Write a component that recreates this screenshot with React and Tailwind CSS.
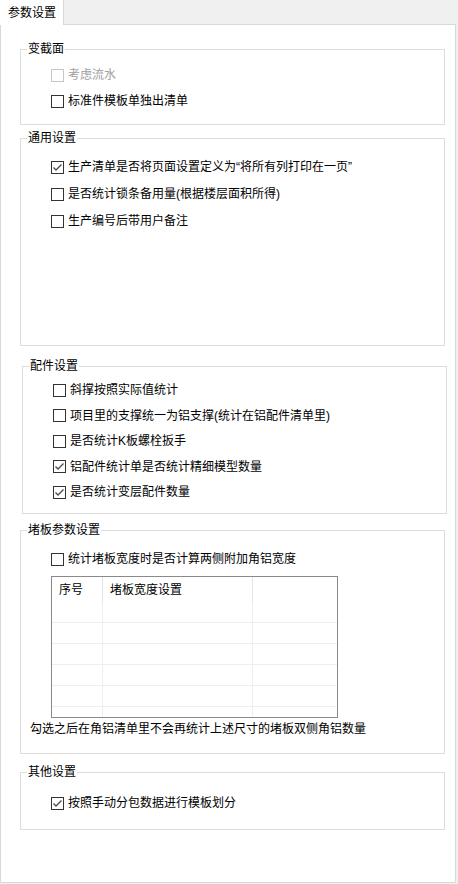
import React from 'react';

const font = { fontFamily: '"Liberation Sans", "Noto Sans CJK SC", sans-serif' };

function CheckBox({ checked, disabled }) {
  return (
    <span
      className={`flex h-[13px] w-[13px] shrink-0 items-center justify-center border bg-white ${
        disabled ? 'border-[#c6c6c6]' : 'border-[#333333]'
      }`}
    >
      {checked && (
        <svg width="11" height="11" viewBox="0 0 11 11" fill="none">
          <polyline points="1.5,5.5 4,8 9.5,2.5" stroke="#4a4a4a" strokeWidth="1.3" />
        </svg>
      )}
    </span>
  );
}

function Row({ label, checked, disabled, className = '' }) {
  return (
    <div className={`flex h-[20px] items-center gap-[4px] pl-[30px] ${className}`}>
      <CheckBox checked={checked} disabled={disabled} />
      <span className={disabled ? 'text-[#a0a0a0]' : 'text-black'}>{label}</span>
    </div>
  );
}

function Group({ title, className = '', children }) {
  return (
    <div className={`w-[425px] shrink-0 border border-[#dcdcdc] ${className}`}>
      <div className="-mt-[9px] ml-[6px] w-fit bg-white px-[1px] leading-[16px]">{title}</div>
      {children}
    </div>
  );
}

function WidthTable() {
  const rows = [0, 1, 2, 3, 4];
  return (
    <div className="ml-[30px] mt-[7px] flex h-[142px] w-[287px] flex-col overflow-hidden border border-[#8a8a8a] bg-white">
      <div className="flex h-[25px] shrink-0 items-center">
        <div className="flex h-full w-[51px] items-center border-r border-[#e3e3e3] pl-[7px]">序号</div>
        <div className="flex h-full w-[150px] items-center border-r border-[#e3e3e3] pl-[7px]">堵板宽度设置</div>
        <div className="h-full flex-1" />
      </div>
      <div className="flex flex-1 flex-col">
        {rows.map((r) => (
          <div key={r} className="flex h-[21px] shrink-0 border-b border-[#efefef]">
            <div className="w-[51px] border-r border-[#efefef]" />
            <div className="w-[150px] border-r border-[#efefef]" />
            <div className="flex-1" />
          </div>
        ))}
        <div className="flex flex-1">
          <div className="w-[51px] border-r border-[#efefef]" />
          <div className="w-[150px] border-r border-[#efefef]" />
          <div className="flex-1" />
        </div>
      </div>
    </div>
  );
}

export default function App() {
  return (
    <div className="h-[884px] w-[458px] bg-[#f0f0f0] text-[12px] leading-[16px] text-black" style={font}>
      {/* tab strip */}
      <div className="flex h-[25px] w-[456px]">
        <div className="flex h-[25px] w-[64px] items-center border-r border-[#d9d9d9] bg-white pl-[8px]">
          参数设置
        </div>
        <div className="h-[25px] flex-1 border-b border-[#d9d9d9]" />
      </div>

      {/* tab page */}
      <div className="flex h-[858px] w-[456px] flex-col border-b border-l border-r border-[#d9d9d9] bg-white pl-[19px]">
        <Group title="变截面" className="mt-[24px] h-[76px]">
          <div className="flex flex-col gap-[6px] pt-[8px]">
            <Row label="考虑流水" disabled />
            <Row label="标准件模板单独出清单" />
          </div>
        </Group>

        <Group title="通用设置" className="mt-[13px] h-[208px]">
          <div className="flex flex-col gap-[7px] pt-[11px]">
            <Row label="生产清单是否将页面设置定义为“将所有列打印在一页”" checked />
            <Row label="是否统计锁条备用量(根据楼层面积所得)" />
            <Row label="生产编号后带用户备注" />
          </div>
        </Group>

        <Group title="配件设置" className="ml-[2px] mt-[20px] h-[148px]">
          <div className="flex flex-col gap-[5.5px] pt-[6px]">
            <Row label="斜撑按照实际值统计" />
            <Row label="项目里的支撑统一为铝支撑(统计在铝配件清单里)" />
            <Row label="是否统计K板螺栓扳手" />
            <Row label="铝配件统计单是否统计精细模型数量" checked />
            <Row label="是否统计变层配件数量" checked />
          </div>
        </Group>

        <Group title="堵板参数设置" className="mt-[16px] h-[224px]">
          <div className="pt-[11px]">
            <Row label="统计堵板宽度时是否计算两侧附加角铝宽度" />
            <WidthTable />
            <div className="ml-[9px] mt-[3px]">勾选之后在角铝清单里不会再统计上述尺寸的堵板双侧角铝数量</div>
          </div>
        </Group>

        <Group title="其他设置" className="mt-[18px] h-[58px]">
          <div className="pt-[13px]">
            <Row label="按照手动分包数据进行模板划分" checked />
          </div>
        </Group>
      </div>
    </div>
  );
}
